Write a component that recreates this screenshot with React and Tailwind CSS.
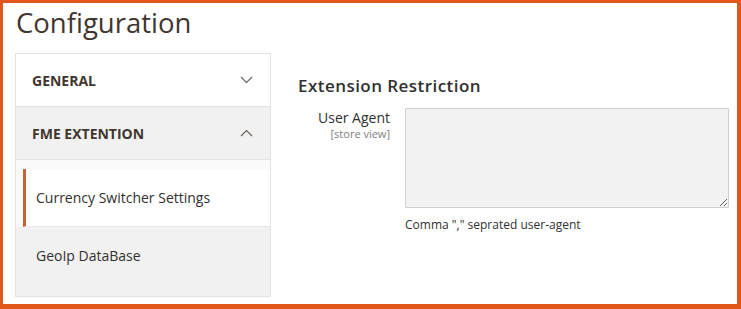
export default function App() {
  const font = { fontFamily: '"Open Sans", "Liberation Sans", sans-serif' };
  return (
    <div
      className="w-[741px] h-[309px] bg-white border-[#e1571b] border-t-[3px] border-l-[3px] border-r-[4px] border-b-[5px] overflow-hidden relative"
      style={font}
    >
      <h1 className="absolute left-[13px] top-[0px] text-[27.5px] leading-[40px] text-[#41362f] font-normal">
        Configuration
      </h1>
      <div className="flex pt-[50px]">
        {/* Sidebar */}
        <div className="ml-[12px] w-[256px] h-[244px] border border-[#e3e3e3] flex flex-col">
          <div className="h-[53px] bg-white flex items-center justify-between pl-[16px] pr-[17px] border-b border-[#e3e3e3]">
            <span className="text-[14px] font-bold text-[#41362f]">GENERAL</span>
            <svg width="13" height="8" viewBox="0 0 13 8" fill="none" stroke="#6b625c" strokeWidth="1.2">
              <path d="M1 1 L6.5 6.5 L12 1" />
            </svg>
          </div>
          <div className="h-[53px] bg-[#f1f1f1] flex items-center justify-between pl-[16px] pr-[17px] border-b border-[#e3e3e3]">
            <span className="text-[14px] font-bold text-[#41362f]">FME EXTENTION</span>
            <svg width="13" height="8" viewBox="0 0 13 8" fill="none" stroke="#6b625c" strokeWidth="1.2">
              <path d="M1 7 L6.5 1.5 L12 7" />
            </svg>
          </div>
          <div className="flex-1 bg-[#fafafa] pt-[9px] flex flex-col">
            <div className="ml-[7px] h-[58px] bg-white border-l-[3px] border-[#c8632f] flex items-center pl-[10px] border-b border-b-[#e8e8e8]">
              <span className="text-[14px] text-[#303030]">Currency Switcher Settings</span>
            </div>
            <div className="flex-1 bg-[#f1f1f1] flex items-center pl-[20px] pb-[13px]">
              <span className="text-[14px] text-[#303030]">GeoIp DataBase</span>
            </div>
          </div>
        </div>
        {/* Content */}
        <div className="ml-[27px] pt-[21px] flex-1">
          <h2 className="text-[17px] font-semibold text-[#303030] leading-[24px] tracking-[0.45px]">
            Extension Restriction
          </h2>
          <div className="flex mt-[10px]">
            <div className="w-[92px] text-right">
              <div className="text-[14px] text-[#303030] leading-[20px]">User Agent</div>
              <div className="text-[11px] text-[#808080] leading-[12px]">[store view]</div>
            </div>
            <div className="ml-[15px]">
              <textarea
                className="block w-[324px] h-[100px] bg-[#f2f2f2] border border-[#cfcfcf] rounded-[1px] resize"
                readOnly
              />
              <div className="mt-[8px] text-[12px] text-[#303030]">Comma "," seprated user-agent</div>
            </div>
          </div>
        </div>
      </div>
    </div>
  );
}
